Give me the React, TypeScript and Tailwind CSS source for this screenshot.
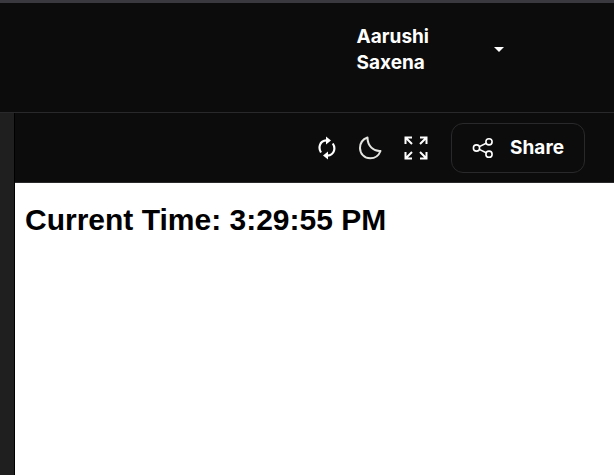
import React from "react";

function RefreshIcon() {
  return (
    <svg width="18" height="24" viewBox="0 0 18 24" fill="none" stroke="currentColor" strokeWidth="2.2" aria-hidden="true">
      <path d="M3 16.5C.2 12.2 1.2 4.8 8.500 4.400" />
      <path d="M14.800 7.500c2.900 4.300 1.900 11.700-5.400 12.100" />
      <path d="M8 .4v8l5-4z" fill="currentColor" stroke="none" />
      <path d="M10 15.600v8l-5-4z" fill="currentColor" stroke="none" />
    </svg>
  );
}

function MoonIcon() {
  return (
    <svg width="24" height="24" viewBox="0 0 24 24" fill="none" stroke="currentColor" strokeWidth="2" strokeLinejoin="round" aria-hidden="true">
      <path d="M9.500 1.500C5 3.200 2 7.300 2 12c0 6 4.600 10.300 10.200 10.300 4.800 0 8.600-2.800 10.300-7.300C15.500 15.500 9.500 10 9.500 1.500z" />
    </svg>
  );
}

function ExpandIcon() {
  return (
    <svg width="24" height="24" viewBox="0 0 24 24" fill="none" stroke="currentColor" strokeWidth="2" aria-hidden="true">
      <path d="M1.500 8V1.500H8M1.500 1.500l6.500 6.500M16 1.500h6.500V8M22.500 1.500L16 8M1.500 16v6.500H8M1.500 22.500L8 16M22.500 16v6.500H16M22.500 22.500L16 16" />
    </svg>
  );
}

function ShareIcon() {
  return (
    <svg width="22" height="22" viewBox="0 0 22 22" fill="none" stroke="currentColor" strokeWidth="1.6" aria-hidden="true">
      <circle cx="4.5" cy="11" r="3.1" />
      <circle cx="17" cy="4.8" r="3.1" />
      <circle cx="17" cy="17.2" r="3.1" />
      <path d="M7.3 9.6l6.9-3.4M7.3 12.4l6.9 3.4" />
    </svg>
  );
}

export default function App() {
  return (
    <div className="flex min-h-screen flex-col bg-[#0c0c0c] font-['Inter',sans-serif] text-white">
      <header className="flex justify-end border-t-3 border-b border-t-[#39393f] border-b-[#29292b] pt-[21px] pr-[109px] pb-9">
        <button type="button" className="flex items-center gap-16 text-left text-[19px] leading-[26px] font-bold">
          <span>
            Aarushi
            <br />
            Saxena
          </span>
          <svg width="12" height="6" viewBox="0 0 12 6" fill="currentColor" aria-hidden="true">
            <path d="M1 0h10L6 5z" />
          </svg>
        </button>
      </header>
      <div className="flex grow">
        <aside className="w-[15px] shrink-0 border-r border-black bg-[#1f1f1f]" />
        <main className="flex grow flex-col">
          <div className="flex items-center justify-end border-b border-[#29292b] pt-[10px] pr-[29px] pb-[9px]">
            <div className="flex items-center gap-[22px] pr-[23px]">
              <button type="button" aria-label="Refresh">
                <RefreshIcon />
              </button>
              <button type="button" aria-label="Dark mode" className="text-[#e4e4e0]">
                <MoonIcon />
              </button>
              <button type="button" aria-label="Full screen">
                <ExpandIcon />
              </button>
            </div>
            <button
              type="button"
              className="flex h-[50px] items-center gap-4 rounded-xl border border-[#29292b] px-5 text-[19px] font-bold"
            >
              <ShareIcon />
              Share
            </button>
          </div>
          <section className="grow bg-white px-[10px] py-[19px] font-['Liberation_Sans',Arial,sans-serif] text-black">
            <h1 className="text-[30px] leading-[36px] font-bold">Current Time: 3:29:55 PM</h1>
          </section>
        </main>
      </div>
    </div>
  );
}
